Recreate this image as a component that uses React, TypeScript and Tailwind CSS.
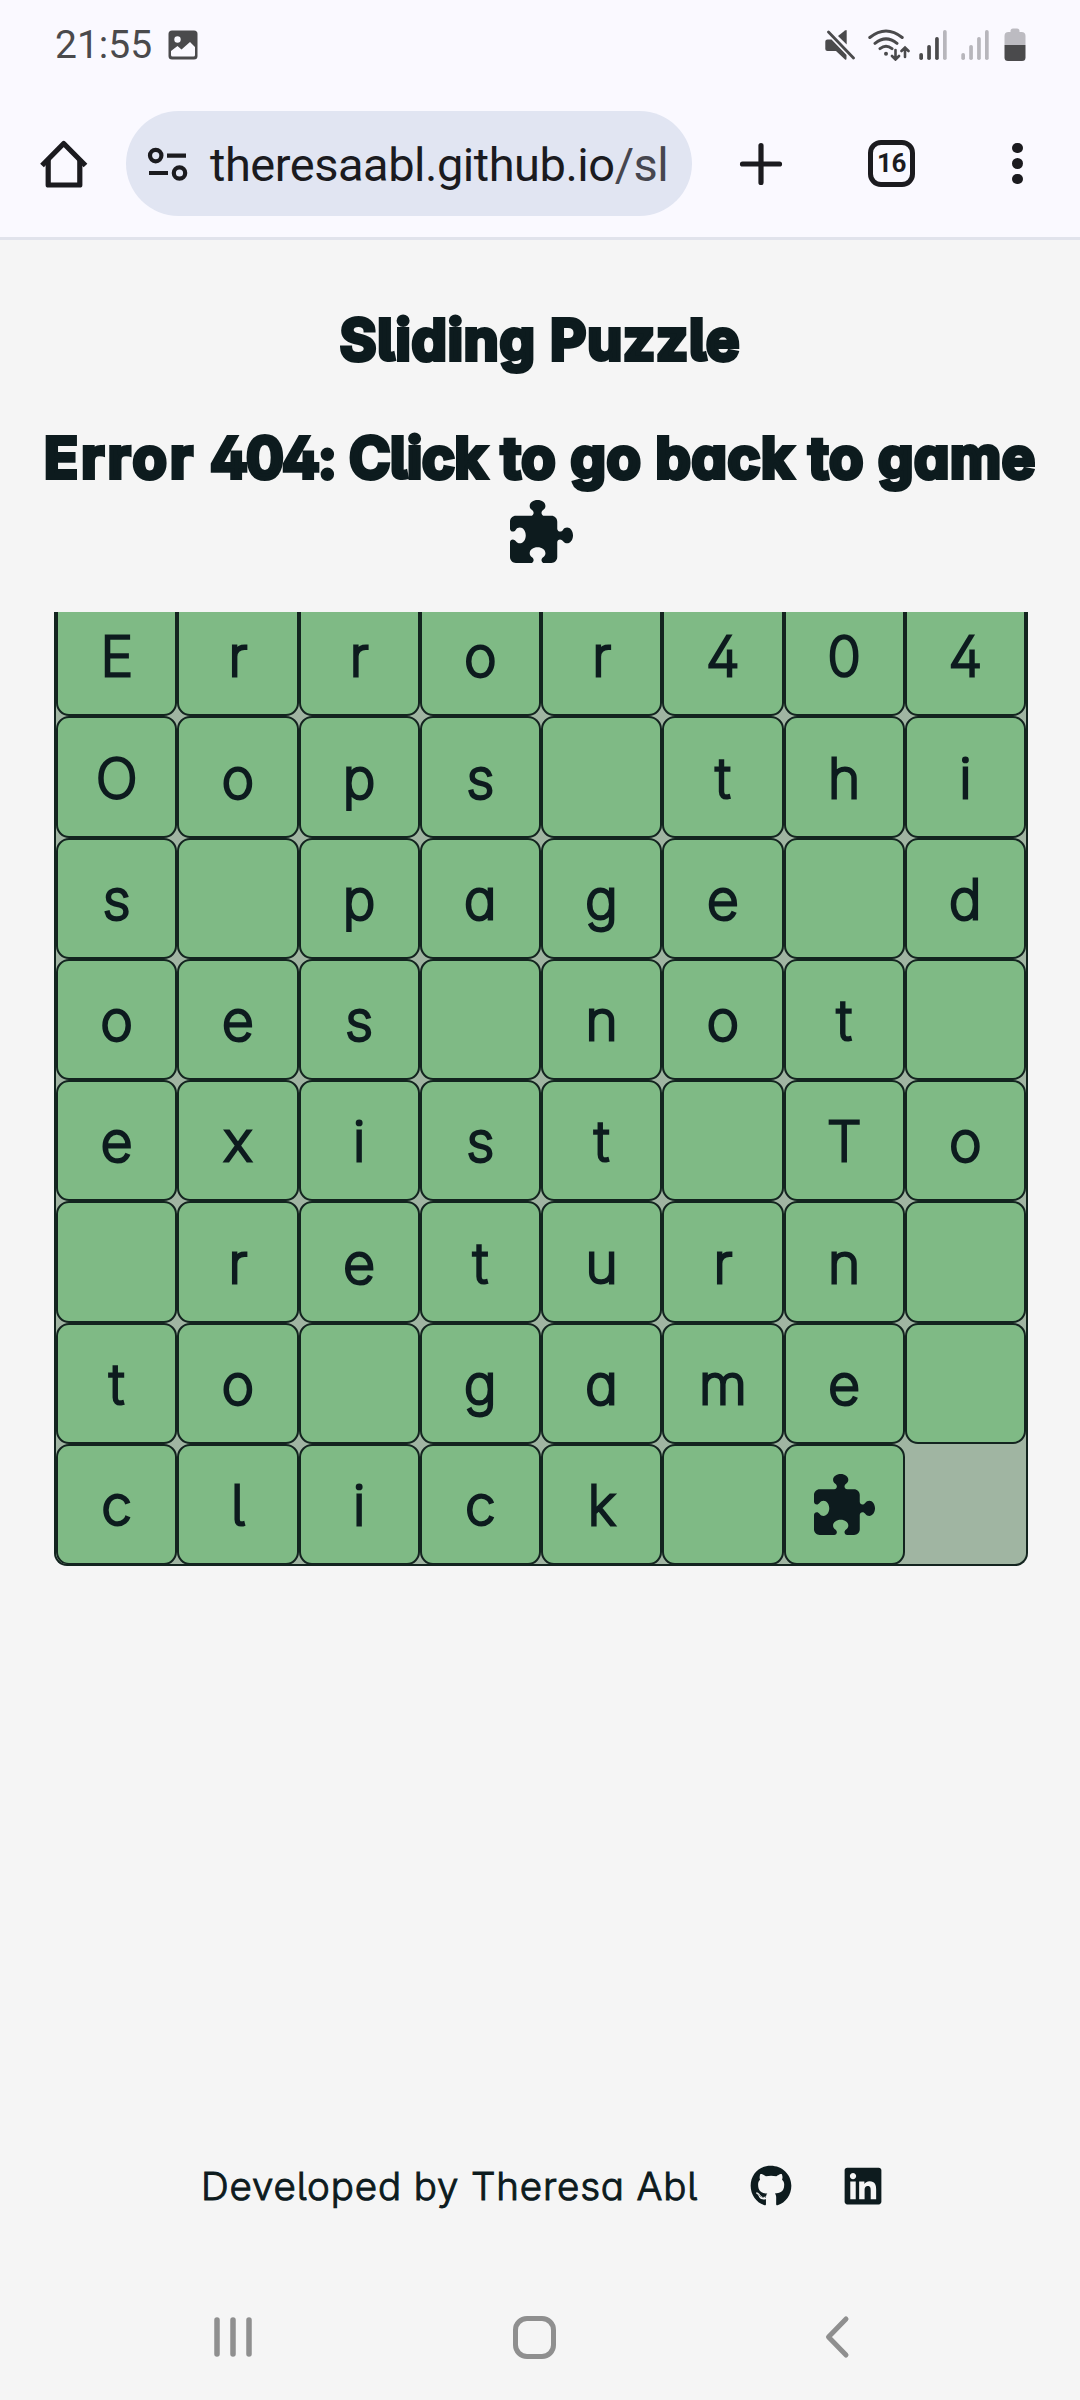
import { FaGithub, FaLinkedin } from "react-icons/fa";
import { FaPuzzlePiece } from "react-icons/fa6";

const rows = ["Error404", "Oops thi", "s page d", "oes not ", "exist To", " return ", "to game ", "click *"];

const INK = "text-[#0d1b1e]";
const ROUND = "font-['Inter'] [font-feature-settings:'cv11','cv02','cv05'] [-webkit-text-stroke-color:#0d1b1e] [stroke-linejoin:round]";

function Signal({ level }: { level: number }) {
  const heights = [7, 15, 23, 30];
  return (
    <svg className="h-[32px] w-[29px] shrink-0" viewBox="0 0 29 32">
      {heights.map((h, i) => (
        <rect key={i} x={0.3 + i * 7.9} y={31 - h} width="3.7" height={h} rx="1.8" fill={i < level ? "#4a4a4c" : "#b7b6bc"} />
      ))}
    </svg>
  );
}

function StatusBar() {
  return (
    <div className="flex h-[88px] items-center pl-[55px] pr-[54px] pt-[1px]">
      <span className="font-[Roboto] text-[39px] leading-[88px] text-[#4a4a4c]">21:55</span>
      <svg className="ml-[16px] h-[30px] w-[30px]" viewBox="0 0 30 30">
        <rect x="0.5" y="0.5" width="29" height="29" rx="3.5" fill="#4a4a4c" />
        <circle cx="9.5" cy="9.5" r="3.2" fill="#faf9ff" />
        <path d="M3 21l6.500-5 4 3.500 8.500-7.500 5 5v8q0 1.500-1.500 1.500h-21q-1.500 0-1.500-1.500z" fill="#faf9ff" />
      </svg>
      <div className="ml-auto flex items-center">
        <svg className="h-[32px] w-[30px]" viewBox="0 0 30 32" fill="#4a4a4c">
          <path d="M13 7l7-5.500q1.700-1 1.700.5v13.500z" />
          <path d="M2.500 10.500h4l15 15.500v3.500q0 1.700-1.500 1l-9-8.500h-8.500q-2.200 0-2.200-2v-7.500q0-2 2.200-2z" />
          <path d="M3.500 3l25 26" stroke="#4a4a4c" strokeWidth="2.800" strokeLinecap="round" />
        </svg>
        <svg className="ml-[13px] h-[32px] w-[42px]" viewBox="0 0 42 32" fill="none" stroke="#4a4a4c" strokeWidth="3" strokeLinecap="round">
          <path d="M1.800 8.500Q18 -4.500 34.200 8.500M7 14.300Q18 5.500 29 14.300M12 19.600Q18 15 24 19.600" />
          <circle cx="18" cy="24.700" r="2" fill="#4a4a4c" stroke="none" />
          <path d="M27.500 21v9M24 27l3.500 3.500 3.500-3.500M37 28v-9M33.500 22l3.500-3.500 3.500 3.500" strokeWidth="2.600" />
        </svg>
        <div className="ml-[9px]"><Signal level={3} /></div>
        <div className="ml-[13px]"><Signal level={0} /></div>
        <svg className="ml-[14px] h-[34px] w-[22px]" viewBox="0 0 22 34">
          <path d="M6.500 4V3q0-2.500 2.500-2.500h4q2.500 0 2.500 2.500v1h2q4 0 4 4v9h-21V8q0-4 4-4z" fill="#bcbbc1" />
          <path d="M.5 17h21v12.500q0 3.500-3.500 3.500h-14q-3.500 0-3.500-3.500z" fill="#4a4a4c" />
        </svg>
      </div>
    </div>
  );
}

function Toolbar() {
  return (
    <div className="flex h-[152px] items-start border-b-[3px] border-[#e1e3ec] pt-[23px]">
      <div className="flex h-[105px] w-[126px] items-center pl-[39px]">
        <svg className="h-[50px] w-[50px]" viewBox="0 0 50 50" fill="none" stroke="#1b1b1f" strokeWidth="5.200" strokeLinejoin="round">
          <path d="M9.200 20v26h31.600V20" />
          <path d="M3 26.500L24.700 4.500 46.500 26.500" strokeLinejoin="round" />
        </svg>
      </div>
      <div className="flex h-[105px] w-[566px] items-center rounded-full bg-[#e1e5f2] pl-[21px]">
        <svg className="h-[36px] w-[42px] shrink-0" viewBox="0 0 42 36" fill="none" stroke="#1b1b1f" strokeWidth="4.200">
          <circle cx="8.700" cy="9.600" r="5.700" />
          <path d="M20 9.600h19M2 27h19" />
          <circle cx="32.500" cy="27" r="5.700" />
        </svg>
        <span className="ml-[21px] mt-[3px] whitespace-nowrap font-[Roboto] text-[47px] tracking-[-0.480px] text-[#1b1b1f]">
          theresaabl.github.io<span className="text-[#46464f]">/sl</span>
        </span>
      </div>
      <div className="flex h-[105px] flex-1 items-center pl-[47px]">
        <svg className="h-[44px] w-[44px]" viewBox="0 0 44 44" stroke="#1b1b1f" strokeWidth="5.200" strokeLinecap="round">
          <path d="M22 3.500v37M3.500 22h37" />
        </svg>
        <div className="ml-[85px] flex h-[47px] w-[47px] items-center justify-center rounded-[13px] border-[5px] border-[#1b1b1f] font-[Roboto] text-[26px] font-bold tracking-[-0.500px] text-[#1b1b1f]">
          16
        </div>
        <div className="ml-[97px] flex flex-col gap-[5px]">
          {[0, 1, 2].map((i) => (
            <i key={i} className="h-[10.600px] w-[10.600px] rounded-full bg-[#1b1b1f]" />
          ))}
        </div>
      </div>
    </div>
  );
}

function Board() {
  return (
    <div className={`ml-[54px] mt-[49px] h-[954px] w-[974px] self-start overflow-hidden rounded-b-[13px] border-2 border-t-0 border-[#13241f] bg-[#a0b5a2] ${INK}`}>
      <div className="-mt-[17px] grid grid-cols-[repeat(8,121.250px)]">
        {rows.flatMap((row, r) =>
          row.split("").map((c, i) => (
            <div
              key={`${r}-${i}`}
              className="flex h-[121.250px] items-center justify-center rounded-[13px] border-2 border-[#13241f] bg-[#7fba85]"
            >
              {c === "*" ? (
                <FaPuzzlePiece className="h-[61px] w-[61px]" />
              ) : (
                <span className={`${ROUND} mt-[2px] text-[55px] font-extralight [-webkit-text-stroke-width:3px]`}>{c}</span>
              )}
            </div>
          ))
        )}
      </div>
    </div>
  );
}

export default function App() {
  return (
    <div className="flex h-[2400px] w-[1080px] flex-col overflow-hidden bg-[#f5f5f5]">
      <header className="bg-[#faf9ff]">
        <StatusBar />
        <Toolbar />
      </header>
      <main className={`flex flex-col items-center ${INK}`}>
        <h1 className={`${ROUND} mt-[61px] h-[78px] whitespace-nowrap text-[56px] leading-[78px] font-bold tracking-[0.900px] [-webkit-text-stroke-width:4px]`}>
          Sliding Puzzle
        </h1>
        <h2 className={`${ROUND} mt-[40px] h-[78px] whitespace-nowrap text-[56px] leading-[78px] font-bold tracking-[0.700px] [-webkit-text-stroke-width:4px]`}>
          <span className="tracking-[3.200px]">Error</span> <span className="tracking-[-1.800px]">404:</span>{" "}
          <span className="tracking-[-0.300px]">Click</span> to go back to game
        </h2>
        <FaPuzzlePiece className="ml-[2px] mt-[3px] h-[63px] w-[63px]" />
        <Board />
      </main>
      <footer className={`mt-auto flex h-[80px] items-center pl-[201px] ${INK}`}>
        <span className={`${ROUND} mt-[2px] w-[500px] whitespace-nowrap text-[38.500px] font-light tracking-[0.850px] [-webkit-text-stroke-width:1px]`}>Developed by Theresa Abl</span>
        <FaGithub className="ml-[49px] h-[42px] w-[42px]" />
        <FaLinkedin className="ml-[50px] h-[42px] w-[42px]" />
      </footer>
      <nav className="mt-[48px] flex h-[126px] items-center pl-[213px]">
        <svg className="h-[44px] w-[40px]" viewBox="0 0 40 44" stroke="#8f8f8f" strokeWidth="5.500" strokeLinecap="round">
          <path d="M4 5v34M20 5v34M36 5v34" />
        </svg>
        <div className="ml-[260px] h-[43px] w-[43px] rounded-[14px] border-[5px] border-[#8f8f8f]" />
        <svg className="ml-[267px] h-[44px] w-[28px]" viewBox="0 0 28 44" fill="none" stroke="#8f8f8f" strokeWidth="5" strokeLinecap="round" strokeLinejoin="round">
          <path d="M23 4L5.500 22 23 40" />
        </svg>
      </nav>
    </div>
  );
}
